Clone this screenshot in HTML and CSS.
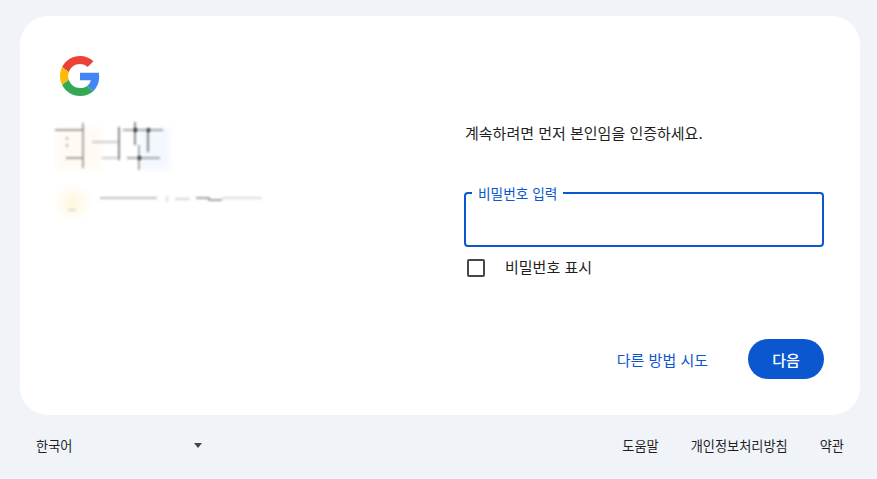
FILE: index.html
```html
<!DOCTYPE html>
<html lang="ko">
<head>
<meta charset="utf-8">
<title>Google 로그인</title>
<link rel="stylesheet" href="styles.css">
</head>
<body>
<main class="card">
  <section class="left">
    <svg class="logo" viewBox="0 0 48 48" width="40" height="40" aria-label="Google">
      <path fill="#EA4335" d="M24 9.5c3.54 0 6.71 1.22 9.21 3.6l6.85-6.85C35.9 2.38 30.47 0 24 0 14.62 0 6.51 5.38 2.56 13.22l7.98 6.19C12.43 13.72 17.74 9.5 24 9.5z"/>
      <path fill="#4285F4" d="M46.98 24.55c0-1.57-.15-3.09-.38-4.55H24v9.02h12.94c-.58 2.96-2.26 5.48-4.78 7.18l7.73 6c4.51-4.18 7.09-10.36 7.09-17.65z"/>
      <path fill="#FBBC05" d="M10.53 28.59c-.48-1.45-.76-2.99-.76-4.59s.27-3.14.76-4.59l-7.98-6.19C.92 16.46 0 20.12 0 24c0 3.88.92 7.54 2.56 10.78l7.97-6.19z"/>
      <path fill="#34A853" d="M24 48c6.48 0 11.93-2.13 15.89-5.81l-7.73-6c-2.15 1.45-4.92 2.3-8.16 2.3-6.26 0-11.57-4.22-13.47-9.91l-7.98 6.19C6.51 42.62 14.62 48 24 48z"/>
    </svg>
    <svg class="redacted-name" viewBox="0 0 125 55" width="125" height="55" aria-hidden="true">
      <defs>
        <filter id="soft" x="-10%" y="-20%" width="120%" height="140%"><feGaussianBlur stdDeviation="0.8"/></filter>
        <filter id="wash" x="-20%" y="-30%" width="140%" height="160%"><feGaussianBlur stdDeviation="3"/></filter>
      </defs>
      <rect x="6" y="8" width="45" height="42" fill="#fffaf4" filter="url(#wash)"/>
      <rect x="90" y="8" width="30" height="42" fill="#f2f8fe" filter="url(#wash)"/>
      <g fill="none" stroke="#222" filter="url(#soft)">
        <path stroke-opacity=".55" stroke-width="1.4" d="M5 10H34M16 38H33M33 3V48"/>
        <path stroke-opacity=".3" stroke-width="2" stroke-dasharray="3 4" d="M17 17V31"/>
        <path stroke-opacity=".3" stroke-width="1.4" d="M42 22H68M52 38H68"/>
        <path stroke-opacity=".65" stroke-width="1.6" d="M69 7V40"/>
        <path stroke-opacity=".5" stroke-width="1.4" d="M73 10H113M77 38H110"/>
        <path stroke-opacity=".65" stroke-width="1.6" d="M85 2V25M98 10V32"/>
        <path stroke-opacity=".55" stroke-width="1.4" d="M89 25V50"/>
      </g>
      <g fill="#111" opacity=".65" filter="url(#soft)">
        <rect x="84" y="8" width="3" height="4"/>
        <rect x="97" y="8" width="3" height="4"/>
        <rect x="88" y="36" width="3" height="4"/>
      </g>
    </svg>
    <svg class="redacted-mail" viewBox="0 0 220 40" width="220" height="40" aria-hidden="true">
      <defs>
        <radialGradient id="glow"><stop offset="0" stop-color="#fff6dc"/><stop offset="1" stop-color="#fff"/></radialGradient>
        <filter id="soft2" x="-5%" y="-100%" width="110%" height="300%"><feGaussianBlur stdDeviation="0.9"/></filter>
      </defs>
      <circle cx="23" cy="18" r="20" fill="url(#glow)"/>
      <g fill="none" stroke="#555" stroke-width="1.4" filter="url(#soft2)">
        <path stroke-opacity=".5" d="M50 13H107"/>
        <path stroke-opacity=".3" d="M117 11V17M125 14H140"/>
        <path stroke-opacity=".7" d="M146 13H160M158 15H172"/>
        <path stroke-opacity=".25" d="M172 13H212"/>
        <path stroke-opacity=".25" d="M18 25H26"/>
      </g>
    </svg>
  </section>
  <section class="right">
    <p class="notice">계속하려면 먼저 본인임을 인증하세요.</p>
    <div class="field">
      <span class="field-label">비밀번호 입력</span>
    </div>
    <label class="show">
      <span class="box"></span>
      <span class="show-text">비밀번호 표시</span>
    </label>
    <div class="actions">
      <a class="alt" href="#">다른 방법 시도</a>
      <button class="next" type="button">다음</button>
    </div>
  </section>
</main>
<footer class="footer">
  <div class="lang"><span>한국어</span><span class="caret"></span></div>
  <nav class="links">
    <a href="#">도움말</a>
    <a href="#">개인정보처리방침</a>
    <a href="#">약관</a>
  </nav>
</footer>
</body>
</html>
```
FILE: styles.css
```css
* { box-sizing: border-box; }
html, body { margin: 0; height: 100%; }
body {
  background: #f0f4f9;
  padding: 16px 17px 0 20px;
  font-family: "Noto Sans CJK KR", "Liberation Sans", sans-serif;
  color: #1f1f1f;
  overflow: hidden;
}
.card {
  height: 399px;
  background: #fff;
  border-radius: 28px;
  padding: 40px 36px 36px 40px;
  display: flex;
}
.left { width: 404px; display: flex; flex-direction: column; }
.logo { display: block; filter: blur(.4px); }
.redacted-name { display: block; margin-top: 24px; margin-left: -10px; }
.redacted-mail { display: block; margin-top: 10px; margin-left: -10px; }
.right { width: 360px; display: flex; flex-direction: column; }
.notice { margin: 65px 0 0 1px; font-size: 15px; line-height: 24px; }
.field {
  position: relative;
  margin-top: 47px;
  height: 56px;
  border: 2px solid #0b57d0;
  border-radius: 4px;
}
.field-label {
  position: absolute;
  top: -9px;
  left: 6px;
  padding: 0 6px;
  background: #fff;
  color: #0b57d0;
  font-size: 13.7px;
  line-height: 16px;
}
.show { display: flex; align-items: center; margin-top: 10px; height: 22px; font-size: 15px; }
.show-text { line-height: 18px; padding-bottom: 2px; }
.box {
  width: 18px;
  height: 18px;
  margin: 0 20px 0 3px;
  border: 2px solid #444746;
  border-radius: 2px;
}
.actions { display: flex; justify-content: flex-end; align-items: center; margin-top: 60px; }
.alt { color: #0b57d0; font-size: 15px; text-decoration: none; margin-right: 40px; }
.next {
  width: 76px;
  height: 40px;
  border: 0;
  border-radius: 20px;
  background: #0b57d0;
  color: #fff;
  font: 500 15px "Noto Sans CJK KR", sans-serif;
}
.footer {
  display: flex;
  justify-content: space-between;
  align-items: center;
  height: 60px;
  font-size: 13.2px;
}
.lang { width: 183px; padding-left: 16px; display: flex; justify-content: space-between; align-items: center; }
.caret { border: 4px solid transparent; border-top: 5px solid #444746; border-bottom: 0; margin-right: 1px; }
.links { display: flex; gap: 32px; padding-right: 16px; }
.links a { color: #1f1f1f; text-decoration: none; }
```
